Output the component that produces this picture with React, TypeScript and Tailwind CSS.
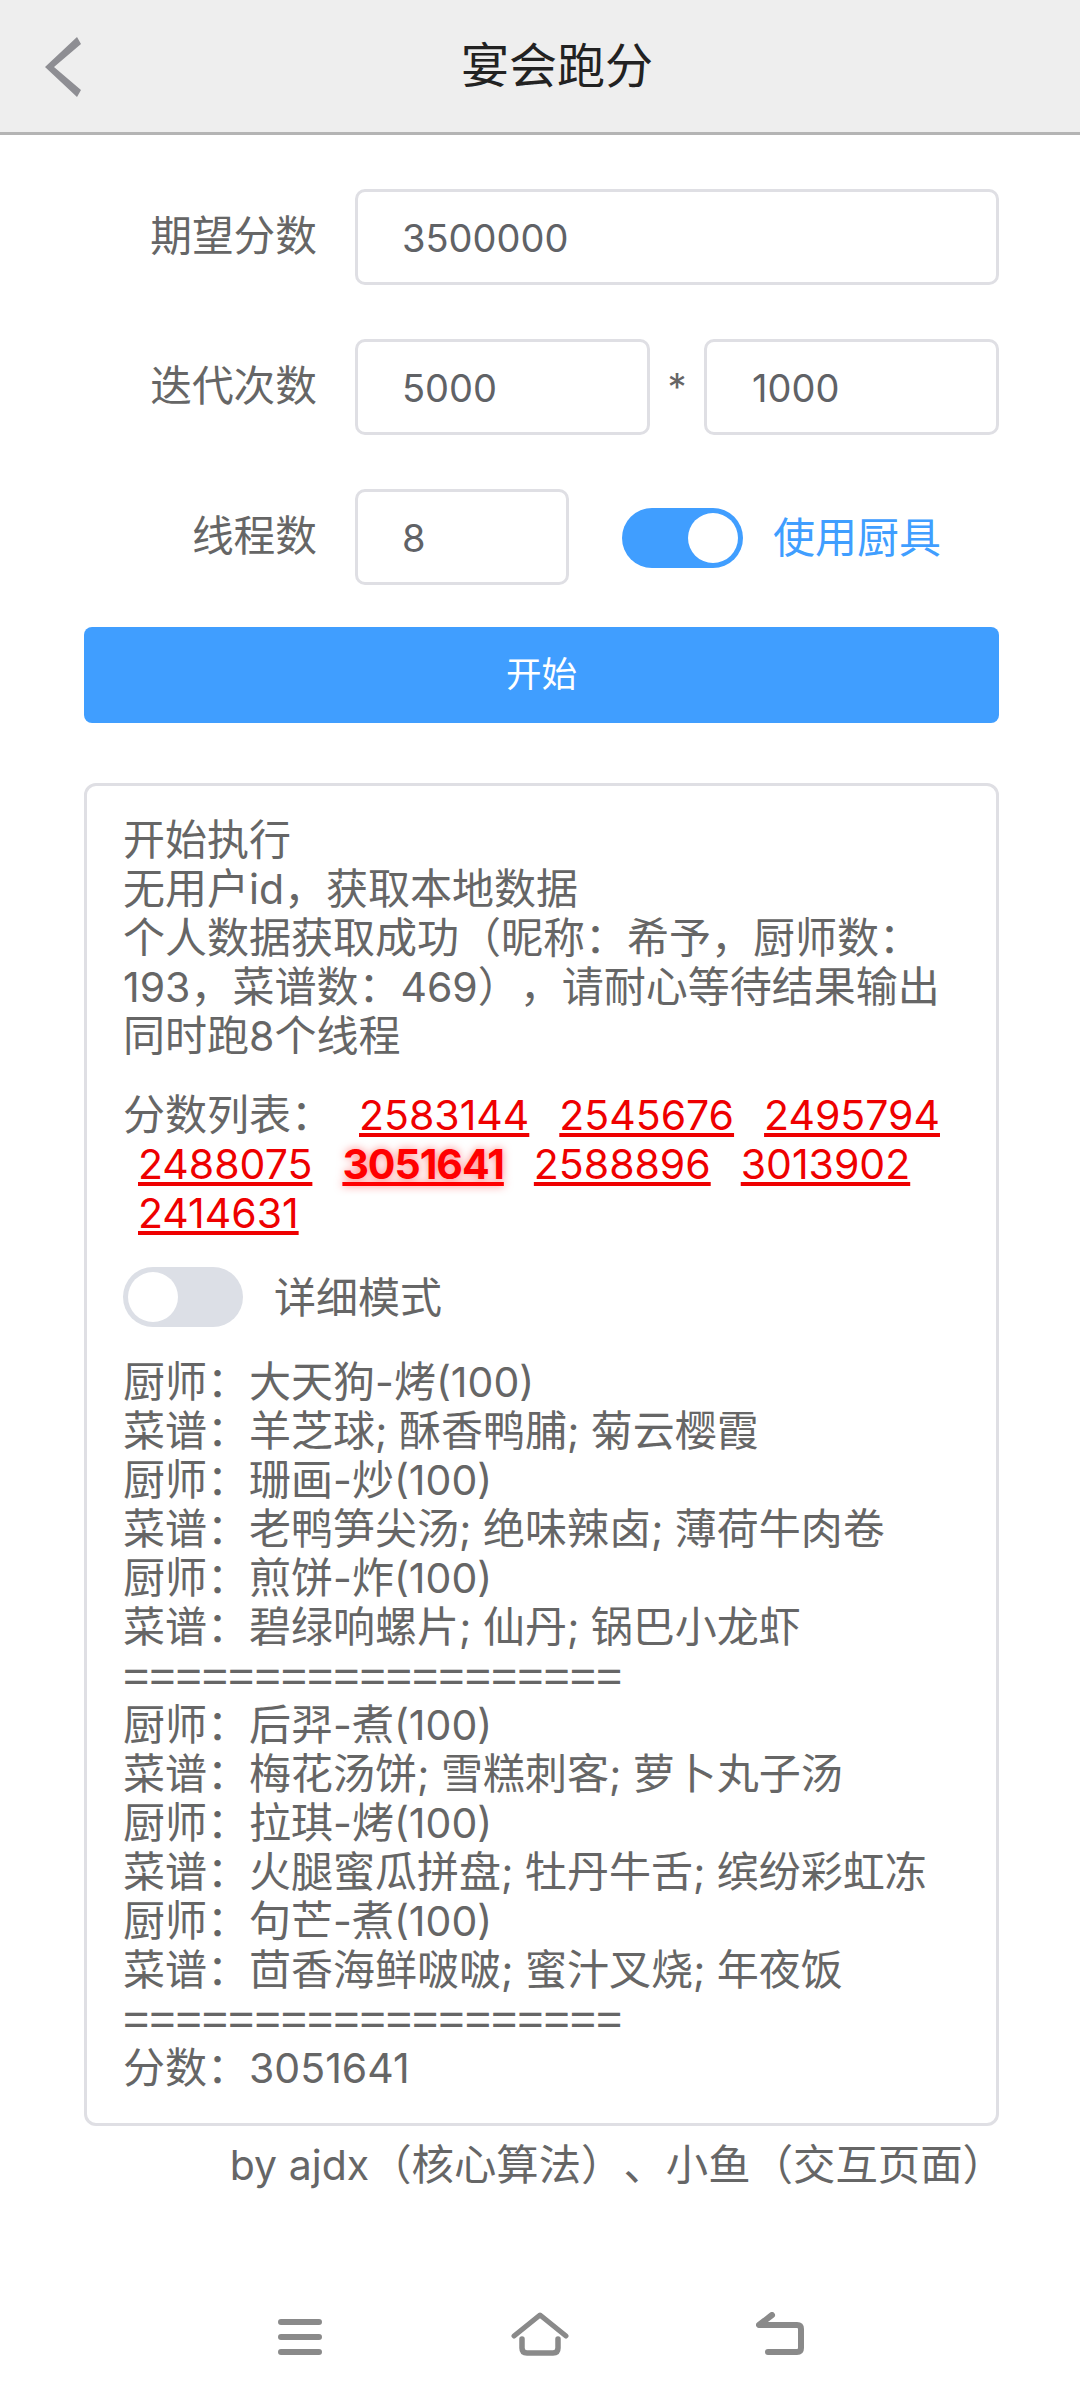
const font = { fontFamily: 'Inter, "Noto Sans CJK SC", sans-serif' };

function Mixed({ text }: { text: string }) {
  const parts = text.split(/([\x21-\x7e ]+)/).filter(Boolean);
  return (
    <>
      {parts.map((p, i) =>
        /^[\x21-\x7e ]+$/.test(p) ? (
          <span key={i} className="text-[41px] leading-[0]">{p}</span>
        ) : (
          <span key={i}>{p}</span>
        )
      )}
    </>
  );
}

function Toggle({ on }: { on: boolean }) {
  return (
    <div className={`flex h-[60px] w-[120px] shrink-0 items-center rounded-full px-[5px] ${on ? "w-[121px] justify-end bg-[#409eff]" : "justify-start bg-[#dcdfe6]"}`}>
      <div className="h-[50px] w-[50px] rounded-full bg-white" />
    </div>
  );
}

function Field({ value, cls }: { value: string; cls: string }) {
  return (
    <div className={`flex h-[96px] items-center rounded-[10px] border-[3px] border-[#dfdfe4] bg-white pl-[44px] pt-[2px] text-[38px] text-[#606266] ${cls}`}>
      {value}
    </div>
  );
}

function Label({ children }: { children: string }) {
  return <div className="w-[233px] shrink-0 pr-[38px] pb-[2px] text-right text-[41.7px] whitespace-nowrap text-[#666666]">{children}</div>;
}

const scoreRows = [
  ["2583144", "2545676", "2495794"],
  ["2488075", "3051641", "2588896", "3013902"],
  ["2414631"],
];

const log = [
  "厨师：大天狗-烤(100)",
  "菜谱：羊芝球; 酥香鸭脯; 菊云樱霞",
  "厨师：珊画-炒(100)",
  "菜谱：老鸭笋尖汤; 绝味辣卤; 薄荷牛肉卷",
  "厨师：煎饼-炸(100)",
  "菜谱：碧绿响螺片; 仙丹; 锅巴小龙虾",
  "===================",
  "厨师：后羿-煮(100)",
  "菜谱：梅花汤饼; 雪糕刺客; 萝卜丸子汤",
  "厨师：拉琪-烤(100)",
  "菜谱：火腿蜜瓜拼盘; 牡丹牛舌; 缤纷彩虹冻",
  "厨师：句芒-煮(100)",
  "菜谱：茴香海鲜啵啵; 蜜汁叉烧; 年夜饭",
  "===================",
  "分数：3051641",
];

function Score({ v }: { v: string }) {
  const best = v === "3051641";
  return (
    <span className={`mx-[15px] inline-block text-[41px] leading-[49px] text-[#ee0000] underline decoration-[4px] underline-offset-[3px] ${best ? "font-bold tracking-[-1px] text-[#ff0000] [text-shadow:0_0_8px_rgba(255,0,0,0.5)]" : ""}`}>
      {v}
    </span>
  );
}

export default function App() {
  return (
    <div className="flex h-[2400px] w-[1080px] flex-col overflow-hidden bg-white [text-spacing-trim:space-all]" style={font}>
      <header className="relative flex h-[135px] shrink-0 items-center justify-center border-b-[3px] border-[#b4b4b4] bg-[#eeeeee] pl-[34px]">
        <svg className="absolute top-[37px] left-[45px]" width="36" height="60" viewBox="0 0 36 60">
          <path d="M32 0 L36 7 L9 30 L36 53 L32 60 L0 30 Z" fill="#8e8e93" />
        </svg>
        <div className="text-[48px] text-[#222222]">宴会跑分</div>
      </header>

      <main className="flex flex-col pt-[54px] pr-[81px] pl-[84px]">
        <div className="flex items-center pl-[38px]">
          <Label>期望分数</Label>
          <Field value="3500000" cls="flex-1" />
        </div>
        <div className="mt-[54px] flex items-center pl-[38px]">
          <Label>迭代次数</Label>
          <Field value="5000" cls="w-[295px]" />
          <div className="w-[54px] text-center text-[38px] text-[#666666]">*</div>
          <Field value="1000" cls="flex-1 !pl-[45px]" />
        </div>
        <div className="mt-[54px] flex items-center pl-[38px]">
          <Label>线程数</Label>
          <Field value="8" cls="w-[214px]" />
          <div className="mt-[2px] ml-[53px]"><Toggle on /></div>
          <div className="ml-[30px] text-[42px] text-[#409eff]">使用厨具</div>
        </div>

        <div className="mt-[42px] flex h-[96px] items-center justify-center rounded-[8px] bg-[#409eff] text-[35.5px] text-white">开始</div>

        <section className="mt-[60px] h-[1343px] rounded-[12px] border-[3px] border-[#dfdfe4] pt-[29px] pr-[37px] pl-[36px] text-[42px] leading-[49px] text-[#666666]">
          <div>开始执行</div>
          <div><Mixed text="无用户id，获取本地数据" /></div>
          <div><Mixed text="个人数据获取成功（昵称：希予，厨师数：193，菜谱数：469），请耐心等待结果输出" /></div>
          <div><Mixed text="同时跑8个线程" /></div>
          <div className="mt-[30px]">
            <div className="h-[49px] whitespace-nowrap">分数列表：<span className="inline-block w-[11px]" />{scoreRows[0].map((v) => <Score key={v} v={v} />)}</div>
            {scoreRows.slice(1).map((r) => (
              <div key={r[0]} className="h-[49px] whitespace-nowrap">{r.map((v) => <Score key={v} v={v} />)}</div>
            ))}
          </div>
          <div className="mt-[30px] flex items-center">
            <Toggle on={false} />
            <div className="ml-[31px]">详细模式</div>
          </div>
          <div className="mt-[30px]">
            {log.map((l, i) =>
              l.startsWith("=") ? (
                <div key={i} className="h-[49px] whitespace-nowrap text-[45px]" style={{ fontFamily: '"Liberation Sans", sans-serif' }}>{l}</div>
              ) : (
                <div key={i} className="h-[49px] whitespace-nowrap"><Mixed text={l} /></div>
              )
            )}
          </div>
        </section>

        <div className="mt-[14px] -mr-[6px] text-right text-[42.4px] leading-[49px] text-[#666666]"><Mixed text="by ajdx（核心算法）、小鱼（交互页面）" /></div>
      </main>

      <nav className="mt-auto flex h-[88px] shrink-0 items-start">
        <svg className="mt-[3px] ml-[278px]" width="44" height="44" viewBox="0 0 44 44">
          <path d="M3 7H41M3 22H41M3 37H41" stroke="#8a8a8a" strokeWidth="6" strokeLinecap="round" fill="none" />
        </svg>
        <svg className="ml-[189px]" width="58" height="44" viewBox="0 0 58 44">
          <path d="M3 24L29 3L55 24" stroke="#8a8a8a" strokeWidth="5" strokeLinecap="round" strokeLinejoin="round" fill="none" />
          <path d="M11 27V36Q11 41 16 41H42Q47 41 47 36V27" stroke="#8a8a8a" strokeWidth="5.5" strokeLinecap="round" fill="none" />
        </svg>
        <svg className="ml-[187px]" width="48" height="44" viewBox="0 0 48 44">
          <path d="M16 3L3 13H41Q45 13 45 17V36Q45 40 41 40H12" stroke="#8a8a8a" strokeWidth="6" strokeLinecap="round" strokeLinejoin="round" fill="none" />
        </svg>
      </nav>
    </div>
  );
}
